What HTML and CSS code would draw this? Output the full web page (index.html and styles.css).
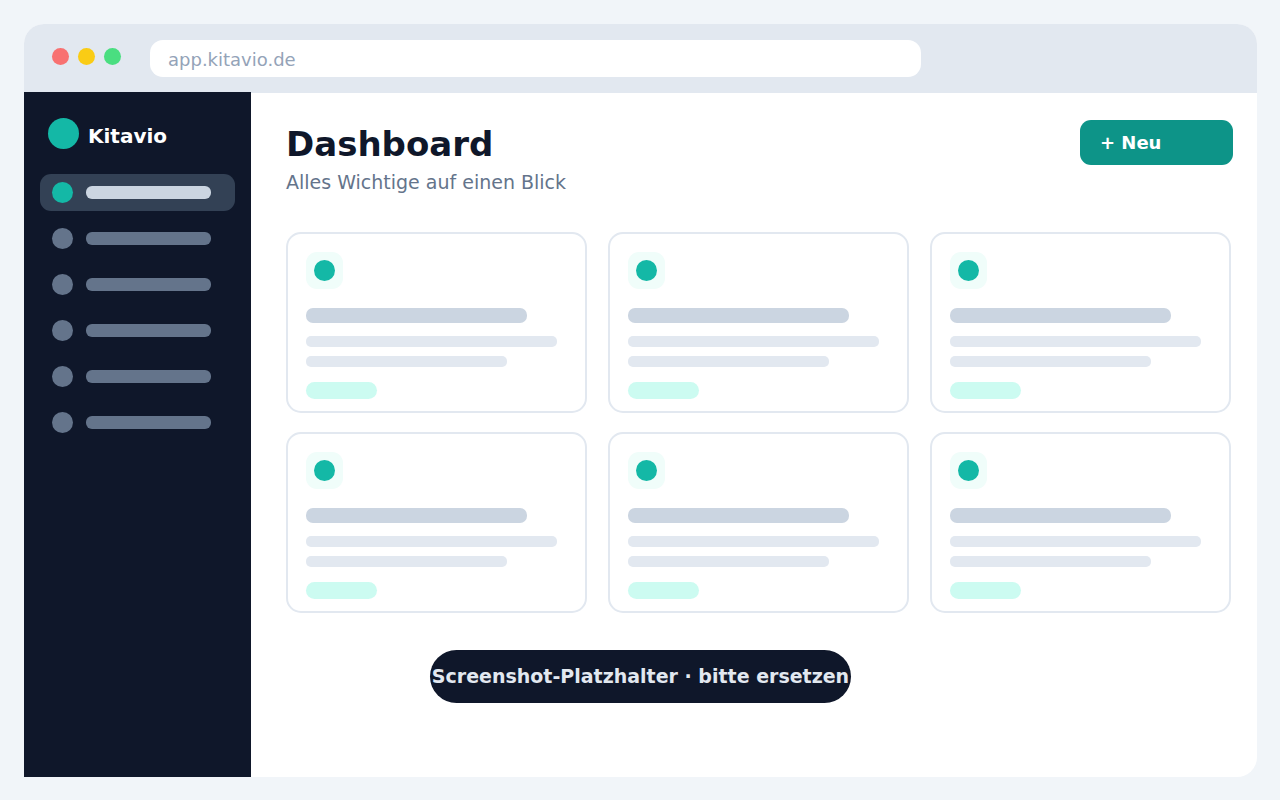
FILE: index.html
```html
<!DOCTYPE html>
<html lang="de">
<head>
<meta charset="utf-8">
<meta name="viewport" content="width=device-width, initial-scale=1">
<title>Kitavio</title>
<link rel="stylesheet" href="styles.css">
</head>
<body>
<div class="window">
  <header class="topbar">
    <div class="lights">
      <span class="light light-red"></span>
      <span class="light light-yellow"></span>
      <span class="light light-green"></span>
    </div>
    <input class="address" type="text" value="app.kitavio.de" aria-label="Adresse">
  </header>
  <div class="body">
    <aside class="sidebar">
      <div class="brand"><span class="brand-mark"></span><span class="brand-name">Kitavio</span></div>
      <ul class="nav">
        <li class="nav-item active"><span class="dot"></span><span class="nav-line"></span></li>
        <li class="nav-item"><span class="dot"></span><span class="nav-line"></span></li>
        <li class="nav-item"><span class="dot"></span><span class="nav-line"></span></li>
        <li class="nav-item"><span class="dot"></span><span class="nav-line"></span></li>
        <li class="nav-item"><span class="dot"></span><span class="nav-line"></span></li>
        <li class="nav-item"><span class="dot"></span><span class="nav-line"></span></li>
      </ul>
    </aside>
    <main class="main">
      <div class="page-head">
        <div>
          <h1 class="title">Dashboard</h1>
          <p class="subtitle">Alles Wichtige auf einen Blick</p>
        </div>
        <button class="new-button" type="button">+ Neu</button>
      </div>
      <div class="cards">
        <article class="card"><div class="card-icon"><span class="dot"></span></div><div class="line heading"></div><div class="line wide"></div><div class="line short"></div><div class="tag"></div></article>
        <article class="card"><div class="card-icon"><span class="dot"></span></div><div class="line heading"></div><div class="line wide"></div><div class="line short"></div><div class="tag"></div></article>
        <article class="card"><div class="card-icon"><span class="dot"></span></div><div class="line heading"></div><div class="line wide"></div><div class="line short"></div><div class="tag"></div></article>
        <article class="card"><div class="card-icon"><span class="dot"></span></div><div class="line heading"></div><div class="line wide"></div><div class="line short"></div><div class="tag"></div></article>
        <article class="card"><div class="card-icon"><span class="dot"></span></div><div class="line heading"></div><div class="line wide"></div><div class="line short"></div><div class="tag"></div></article>
        <article class="card"><div class="card-icon"><span class="dot"></span></div><div class="line heading"></div><div class="line wide"></div><div class="line short"></div><div class="tag"></div></article>
      </div>
    </main>
  </div>
  <div class="notice">Screenshot-Platzhalter · bitte ersetzen</div>
</div>
</body>
</html>
```
FILE: styles.css
```css
* {
  box-sizing: border-box;
}

body {
  margin: 0;
  padding: 24px 23px 23px 24px;
  min-height: 100vh;
  display: flex;
  background: #f1f5f9;
  color: #0f172a;
  font-family: "DejaVu Sans", sans-serif;
}

.window {
  position: relative;
  flex: 1;
  min-width: 0;
  display: flex;
  flex-direction: column;
  background: #fff;
  border-radius: 20px 20px 20px 0;
  overflow: hidden;
}

.topbar {
  display: flex;
  align-items: center;
  gap: 29px;
  padding: 16px 336px 15px 28px;
  background: #e2e8f0;
}

.lights {
  display: flex;
  gap: 9px;
  padding-bottom: 4px;
}

.light {
  width: 17px;
  height: 17px;
  border-radius: 50%;
}

.light-red { background: #f87171; }
.light-yellow { background: #facc15; }
.light-green { background: #4ade80; }

.address {
  flex: 1;
  min-width: 0;
  height: 37px;
  padding: 2px 18px 0;
  border: 0;
  border-radius: 13px;
  background: #fff;
  color: #94a3b8;
  font: 18px "DejaVu Sans", sans-serif;
}

.body {
  flex: 1;
  display: flex;
}

.sidebar {
  flex: none;
  width: 227px;
  padding: 26px 16px;
  background: #0f172a;
}

.brand {
  display: flex;
  align-items: center;
  gap: 9px;
  padding-left: 8px;
}

.brand-mark {
  width: 31px;
  height: 31px;
  border-radius: 50%;
  background: #14b8a6;
}

.brand-name {
  padding-top: 4px;
  color: #fff;
  font-size: 20px;
  font-weight: 700;
  line-height: 24px;
}

.nav {
  display: grid;
  gap: 9px;
  margin: 25px 0 0;
  padding: 0;
  list-style: none;
}

.nav-item {
  display: flex;
  align-items: center;
  gap: 13px;
  height: 37px;
  padding: 0 12px;
  border-radius: 11px;
}

.dot {
  flex: none;
  width: 21px;
  height: 21px;
  border-radius: 50%;
  background: #14b8a6;
}

.nav-line {
  width: 125px;
  height: 13px;
  border-radius: 6px;
  background: #64748b;
}

.nav-item:not(.active) .dot { background: #64748b; }
.active { background: #334155; }
.active .nav-line { background: #cbd5e1; }

.main {
  flex: 1;
  min-width: 0;
  padding: 27px 24px 27px 35px;
  border-top: 1px solid #e2e8f0;
}

.page-head {
  display: flex;
  justify-content: space-between;
  align-items: flex-start;
  gap: 20px;
}

.title {
  margin: 4px 0 0;
  font-size: 34px;
  line-height: 40px;
}

.subtitle {
  margin: 6px 0 0;
  color: #64748b;
  font-size: 19px;
  line-height: 24px;
}

.new-button {
  width: 153px;
  height: 45px;
  padding: 0 20px;
  border: 0;
  border-radius: 11px;
  background: #0d9488;
  color: #fff;
  font: 700 18px "DejaVu Sans", sans-serif;
  text-align: left;
}

.cards {
  display: grid;
  grid-template-columns: repeat(3, 1fr);
  gap: 19px 21px;
  margin: 38px 2px 0 0;
}

.card {
  min-width: 0;
  padding: 18px 18px 12px;
  border: 2px solid #e2e8f0;
  border-radius: 15px;
}

.card-icon {
  display: grid;
  place-items: center;
  width: 37px;
  height: 37px;
  border-radius: 11px;
  background: #f0fdfa;
}

.line {
  max-width: 100%;
  height: 11px;
  border-radius: 5px;
  background: #e2e8f0;
}

.heading {
  width: 221px;
  height: 15px;
  margin: 19px 0 13px;
  border-radius: 7px;
  background: #cbd5e1;
}

.wide {
  width: 251px;
  margin-bottom: 9px;
}

.short {
  width: 201px;
  margin-bottom: 15px;
}

.tag {
  width: 71px;
  height: 17px;
  border-radius: 9px;
  background: #ccfbf1;
}

.notice {
  position: absolute;
  right: 0;
  bottom: 74px;
  left: 0;
  width: 421px;
  height: 53px;
  margin: 0 auto;
  border-radius: 27px;
  background: #0f172a;
  color: #e2e8f0;
  font-size: 19px;
  font-weight: 700;
  line-height: 53px;
  text-align: center;
  white-space: nowrap;
}
```
